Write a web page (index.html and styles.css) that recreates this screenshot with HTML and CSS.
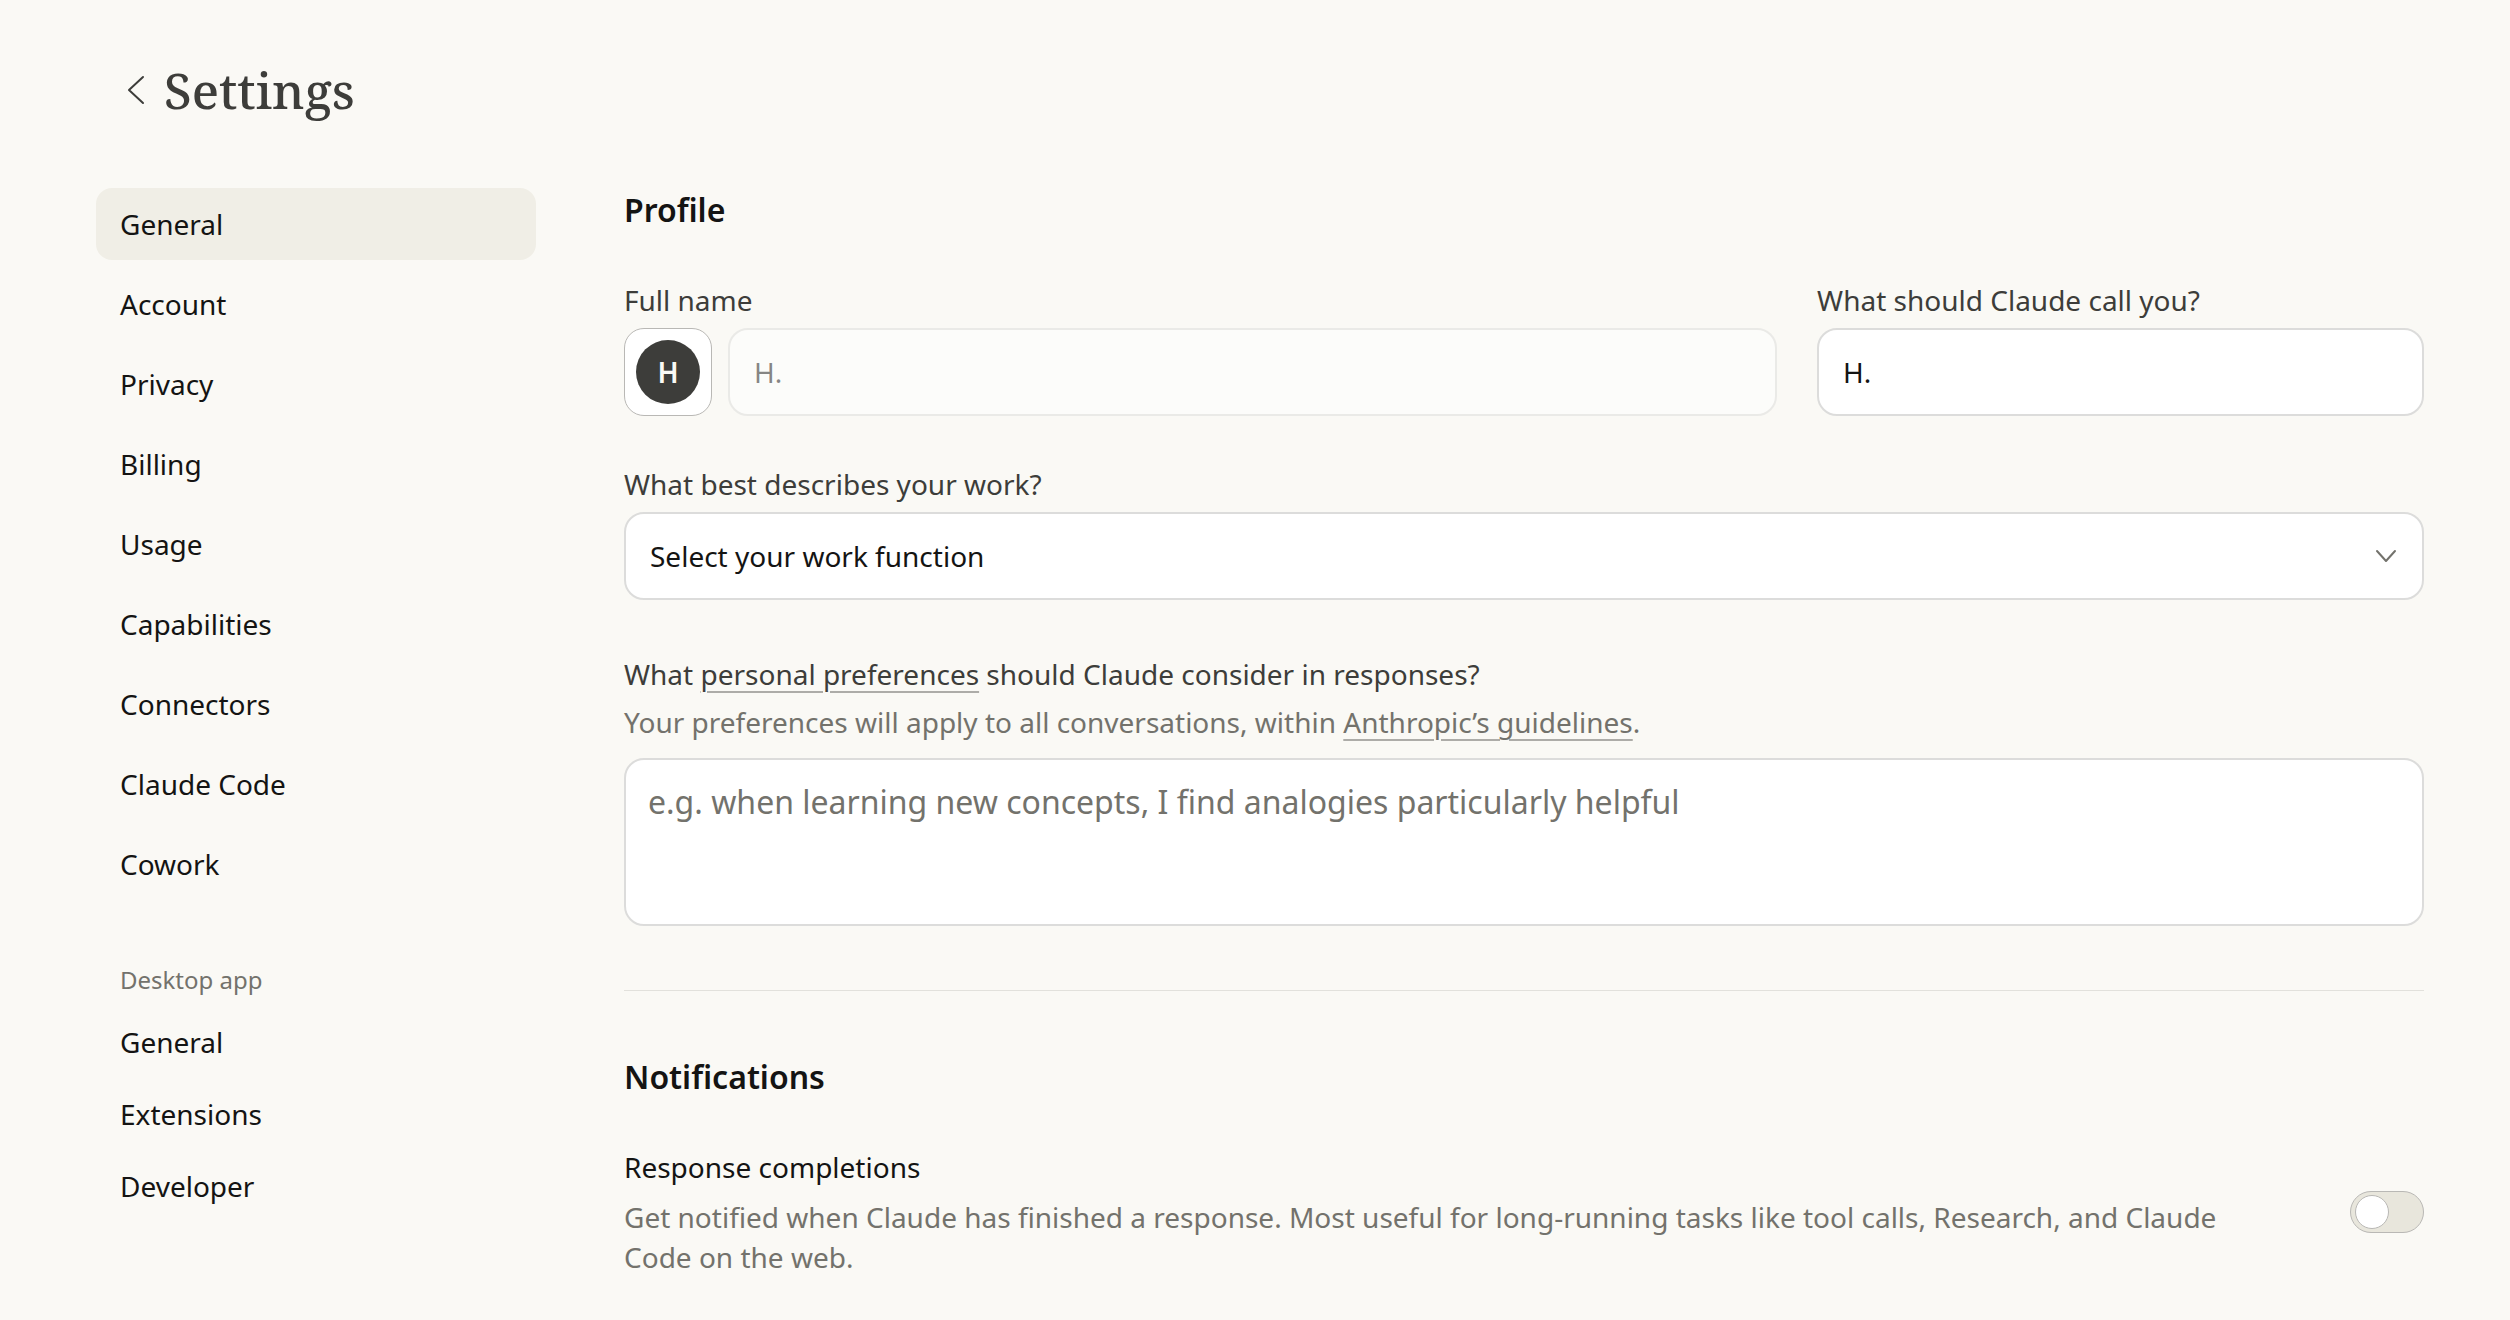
FILE: index.html
```html
<!DOCTYPE html>
<html lang="en">
<head>
    <meta charset="UTF-8">
    <meta name="viewport" content="width=device-width, initial-scale=1.0">
    <title>Settings</title>
    <link rel="stylesheet" href="styles.css">
</head>
<body>
    <header class="page-header">
        <button class="back-button" aria-label="Back">
            <svg width="32" height="32" viewBox="0 0 32 32" fill="none" stroke="currentColor" stroke-width="2" stroke-linecap="round" stroke-linejoin="round"><path d="M23 3 9 16l14 13"/></svg>
        </button>
        <h1>Settings</h1>
    </header>

    <div class="layout">
        <nav class="sidebar">
            <div class="links">
                <a class="active" href="#general">General</a>
                <a href="#account">Account</a>
                <a href="#privacy">Privacy</a>
                <a href="#billing">Billing</a>
                <a href="#usage">Usage</a>
                <a href="#capabilities">Capabilities</a>
                <a href="#connectors">Connectors</a>
                <a href="#claude-code">Claude Code</a>
                <a href="#cowork">Cowork</a>
            </div>
            <h3>Desktop app</h3>
            <div class="desktop-links">
                <a href="#desktop-general">General</a>
                <a href="#extensions">Extensions</a>
                <a href="#developer">Developer</a>
            </div>
        </nav>

        <main>
            <section class="profile">
                <h2>Profile</h2>
                <div class="name-row">
                    <div class="field">
                        <label for="fullName">Full name</label>
                        <div class="name-inputs">
                            <button class="avatar-button" aria-label="Change avatar"><span class="avatar">H</span></button>
                            <input type="text" id="fullName" value="H." disabled>
                        </div>
                    </div>
                    <div class="field">
                        <label for="nickname">What should Claude call you?</label>
                        <input type="text" id="nickname" value="H.">
                    </div>
                </div>
                <div class="field work">
                    <label for="work">What best describes your work?</label>
                    <div class="select-wrap">
                        <select id="work">
                            <option>Select your work function</option>
                        </select>
                        <svg class="chevron" width="24" height="24" viewBox="0 0 24 24" fill="none" stroke="currentColor" stroke-width="2" stroke-linecap="round" stroke-linejoin="round"><path d="m3 7 9 10 9-10"/></svg>
                    </div>
                </div>
                <div class="field preferences">
                    <label for="preferences">What <a href="#preferences">personal preferences</a> should Claude consider in responses?</label>
                    <p>Your preferences will apply to all conversations, within <a href="#guidelines">Anthropic’s guidelines</a>.</p>
                    <textarea id="preferences" placeholder="e.g. when learning new concepts, I find analogies particularly helpful"></textarea>
                </div>
            </section>

            <section class="notifications">
                <h2>Notifications</h2>
                <div class="setting">
                    <div class="setting-text">
                        <label for="completions">Response completions</label>
                        <p>Get notified when Claude has finished a response. Most useful for long-running tasks like tool calls, Research, and Claude Code on the web.</p>
                    </div>
                    <input class="toggle" type="checkbox" role="switch" id="completions">
                </div>
            </section>
        </main>
    </div>
</body>
</html>
```
FILE: styles.css
```css
* {
    box-sizing: border-box;
}
body {
    margin: 0;
    background-color: #faf9f5;
    color: #141413;
    font-family: "Noto Sans", sans-serif;
    font-size: 28px;
    line-height: 40px;
}
h1, h2, h3, p {
    margin: 0;
}
a {
    color: inherit;
    text-decoration: none;
}
button {
    font: inherit;
    cursor: pointer;
}

/* header */
.page-header {
    display: flex;
    align-items: center;
    gap: 12px;
    padding: 58px 120px 26px;
    color: #3d3d3a;
}
.page-header h1 {
    font-family: "Noto Serif", "Liberation Serif", serif;
    font-size: 50px;
    font-weight: 500;
    line-height: 64px;
}
.back-button {
    display: flex;
    padding: 0;
    border: none;
    background: none;
    color: inherit;
}

.layout {
    display: grid;
    grid-template-columns: 440px 1fr;
    gap: 88px;
    padding: 40px 86px 40px 96px;
}

/* sidebar */
.links {
    display: flex;
    flex-direction: column;
    gap: 8px;
}
.sidebar a {
    display: block;
    padding: 16px 24px;
    border-radius: 16px;
}
.sidebar a.active {
    background-color: #f0eee6;
}
.sidebar h3 {
    margin: 60px 0 6px;
    padding: 0 24px;
    color: #73726c;
    font-size: 24px;
    font-weight: 400;
}

/* profile form */
h2 {
    font-size: 32px;
    font-weight: 600;
    line-height: 44px;
}
label {
    display: block;
    color: #3d3d3a;
}
p {
    color: #73726c;
}
.field {
    display: flex;
    flex-direction: column;
    gap: 8px;
}
.name-row {
    display: grid;
    grid-template-columns: 19fr 10fr;
    gap: 40px;
    margin-top: 48px;
}
.name-inputs {
    display: flex;
    gap: 16px;
}
input[type="text"], select, textarea {
    width: 100%;
    border: 2px solid #dcdcdb;
    border-radius: 20px;
    background-color: #ffffff;
    color: #141413;
    font: inherit;
}
input[type="text"], select {
    height: 88px;
    padding: 0 24px;
}
input[type="text"]:disabled {
    opacity: 0.5;
}
.avatar-button {
    display: flex;
    flex-shrink: 0;
    align-items: center;
    justify-content: center;
    width: 88px;
    height: 88px;
    padding: 0;
    border: 1px solid #b9b8b5;
    border-radius: 20px;
    background-color: #ffffff;
}
.avatar {
    width: 64px;
    height: 64px;
    border-radius: 50%;
    background-color: #3d3d3a;
    color: #faf9f5;
    font-weight: 600;
    line-height: 64px;
}
.work {
    margin-top: 48px;
}
.select-wrap {
    position: relative;
}
select {
    display: block;
    appearance: none;
}
.chevron {
    position: absolute;
    top: 32px;
    right: 26px;
    color: #73726c;
    pointer-events: none;
}
.preferences {
    margin-top: 54px;
}
.preferences a {
    text-decoration: underline;
    text-decoration-color: #adaca8;
    text-decoration-thickness: 2px;
    text-underline-offset: 6px;
}
textarea {
    display: block;
    height: 168px;
    margin-top: 8px;
    padding: 18px 22px;
    font-size: 32px;
    line-height: 48px;
    resize: none;
}
textarea::placeholder {
    color: #73726c;
}

/* notifications */
.notifications {
    margin-top: 64px;
    padding-top: 64px;
    border-top: 1px solid #e2e1dc;
}
.setting {
    display: flex;
    align-items: center;
    gap: 80px;
    margin-top: 48px;
}
.setting-text {
    display: flex;
    flex: 1;
    flex-direction: column;
    gap: 10px;
}
.setting-text label {
    color: #141413;
}
.toggle {
    display: flex;
    flex-shrink: 0;
    align-items: center;
    width: 74px;
    height: 42px;
    margin: 0;
    padding: 0 4px;
    appearance: none;
    border: 1px solid #b9b8b5;
    border-radius: 21px;
    background-color: #e8e6dc;
    cursor: pointer;
}
.toggle::before {
    content: "";
    width: 32px;
    height: 32px;
    border: 1px solid #b9b8b5;
    border-radius: 50%;
    background-color: #ffffff;
}
.toggle:checked {
    justify-content: flex-end;
    background-color: #2c84db;
}
```
